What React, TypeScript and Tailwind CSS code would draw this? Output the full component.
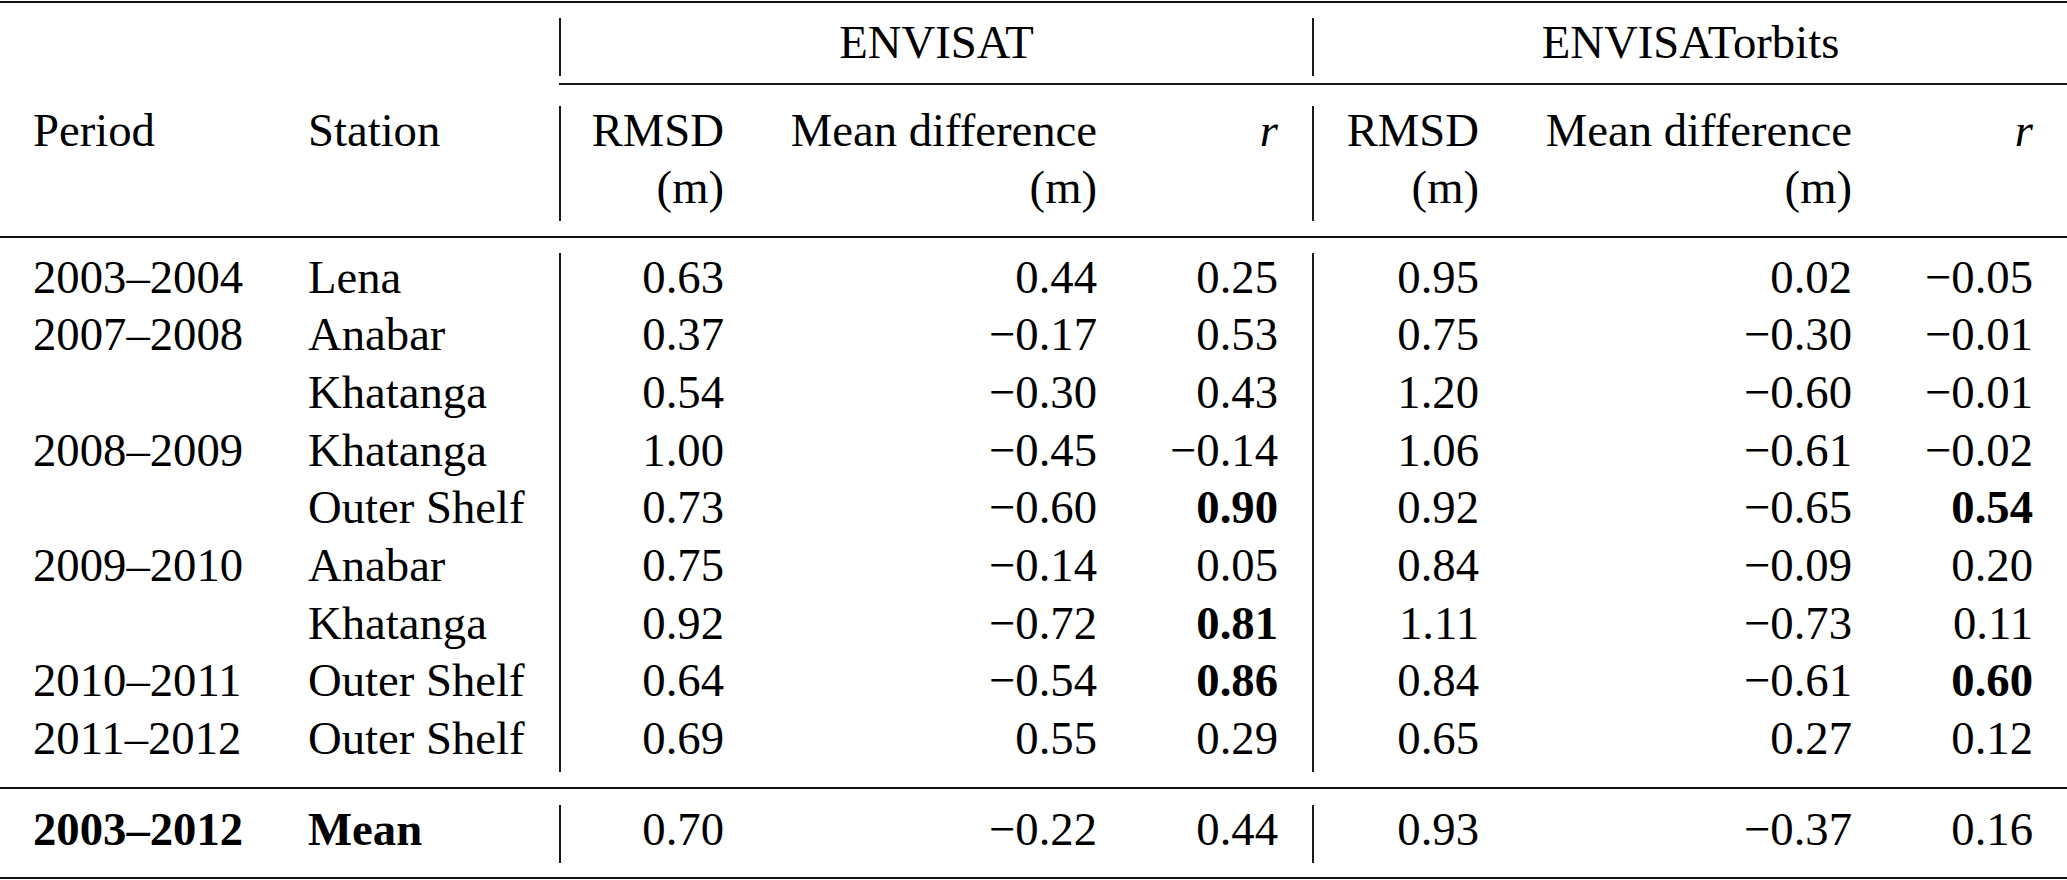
import React from "react";

type V = { t: string; b?: boolean };

const GRID =
  "grid grid-cols-[276px_283px_199px_373px_181px_201px_373px_181px]";

const v = (t: string, b = false): V => ({ t, b });

const rows: V[][] = [
  [v("2003–2004"), v("Lena"), v("0.63"), v("0.44"), v("0.25"), v("0.95"), v("0.02"), v("−0.05")],
  [v("2007–2008"), v("Anabar"), v("0.37"), v("−0.17"), v("0.53"), v("0.75"), v("−0.30"), v("−0.01")],
  [v(""), v("Khatanga"), v("0.54"), v("−0.30"), v("0.43"), v("1.20"), v("−0.60"), v("−0.01")],
  [v("2008–2009"), v("Khatanga"), v("1.00"), v("−0.45"), v("−0.14"), v("1.06"), v("−0.61"), v("−0.02")],
  [v(""), v("Outer Shelf"), v("0.73"), v("−0.60"), v("0.90", true), v("0.92"), v("−0.65"), v("0.54", true)],
  [v("2009–2010"), v("Anabar"), v("0.75"), v("−0.14"), v("0.05"), v("0.84"), v("−0.09"), v("0.20")],
  [v(""), v("Khatanga"), v("0.92"), v("−0.72"), v("0.81", true), v("1.11"), v("−0.73"), v("0.11")],
  [v("2010–2011"), v("Outer Shelf"), v("0.64"), v("−0.54"), v("0.86", true), v("0.84"), v("−0.61"), v("0.60", true)],
  [v("2011–2012"), v("Outer Shelf"), v("0.69"), v("0.55"), v("0.29"), v("0.65"), v("0.27"), v("0.12")],
];

const meanRow: V[] = [
  v("2003–2012", true),
  v("Mean", true),
  v("0.70"),
  v("−0.22"),
  v("0.44"),
  v("0.93"),
  v("−0.37"),
  v("0.16"),
];

const cellCls = [
  "pl-[33px] text-left",
  "pl-[32px] text-left",
  "pr-[34px] text-right border-l-2 border-[#1a1a1a]",
  "pr-[34px] text-right",
  "pr-[34px] text-right",
  "pr-[34px] text-right border-l-2 border-[#1a1a1a]",
  "pr-[34px] text-right",
  "pr-[34px] text-right",
];

function T({ children, b, i }: { children: React.ReactNode; b?: boolean; i?: boolean }) {
  return (
    <span
      className={`block -translate-y-[4px] [font-family:Liberation_Serif,serif] ${b ? "font-bold" : ""} ${i ? "italic" : ""}`}
    >
      {children}
    </span>
  );
}

function DataRow({ r }: { r: V[] }) {
  return (
    <div className={GRID}>
      {r.map((c, i) => (
        <div key={i} className={`h-[57.7px] leading-[57.7px] whitespace-nowrap ${cellCls[i]}`}>
          <T b={c.b}>{c.t}</T>
        </div>
      ))}
    </div>
  );
}

function Rule() {
  return <div className="h-[2px] bg-[#111]" />;
}

function HeadCell({ idx, lines, italic }: { idx: number; lines: string[]; italic?: boolean }) {
  return (
    <div className={`h-[115.4px] leading-[57.7px] whitespace-nowrap ${cellCls[idx]}`}>
      {lines.map((l, k) => (
        <T key={k} i={italic}>
          {l}
        </T>
      ))}
    </div>
  );
}

export default function App() {
  return (
    <div className="w-[2067px] h-[880px] bg-white text-black [font-family:Liberation_Serif,serif] text-[46.7px] overflow-hidden pt-[1px]">
      <Rule />
      <div className={`${GRID} mt-[15px]`}>
        <div className="col-span-2 h-[57.7px]" />
        <div className="col-span-3 h-[57.7px] leading-[57.7px] text-center border-l-2 border-[#1a1a1a]">
          <T>ENVISAT</T>
        </div>
        <div className="col-span-3 h-[57.7px] leading-[57.7px] text-center border-l-2 border-[#1a1a1a]">
          <T>ENVISATorbits</T>
        </div>
      </div>
      <div className={`${GRID} mt-[7.5px]`}>
        <div className="col-start-3 col-span-6 h-[2px] bg-[#1a1a1a]" />
      </div>
      <div className={`${GRID} mt-[20.5px]`}>
        <HeadCell idx={0} lines={["Period"]} />
        <HeadCell idx={1} lines={["Station"]} />
        <HeadCell idx={2} lines={["RMSD", "(m)"]} />
        <HeadCell idx={3} lines={["Mean difference", "(m)"]} />
        <HeadCell idx={4} lines={["r"]} italic />
        <HeadCell idx={5} lines={["RMSD", "(m)"]} />
        <HeadCell idx={6} lines={["Mean difference", "(m)"]} />
        <HeadCell idx={7} lines={["r"]} italic />
      </div>
      <div className="mt-[14.6px]">
        <Rule />
      </div>
      <div className="mt-[15px]">
        {rows.map((r, i) => (
          <DataRow key={i} r={r} />
        ))}
      </div>
      <div className="mt-[15.3px]">
        <Rule />
      </div>
      <div className="mt-[15.7px]">
        <DataRow r={meanRow} />
      </div>
      <div className="mt-[14.6px]">
        <Rule />
      </div>
    </div>
  );
}
